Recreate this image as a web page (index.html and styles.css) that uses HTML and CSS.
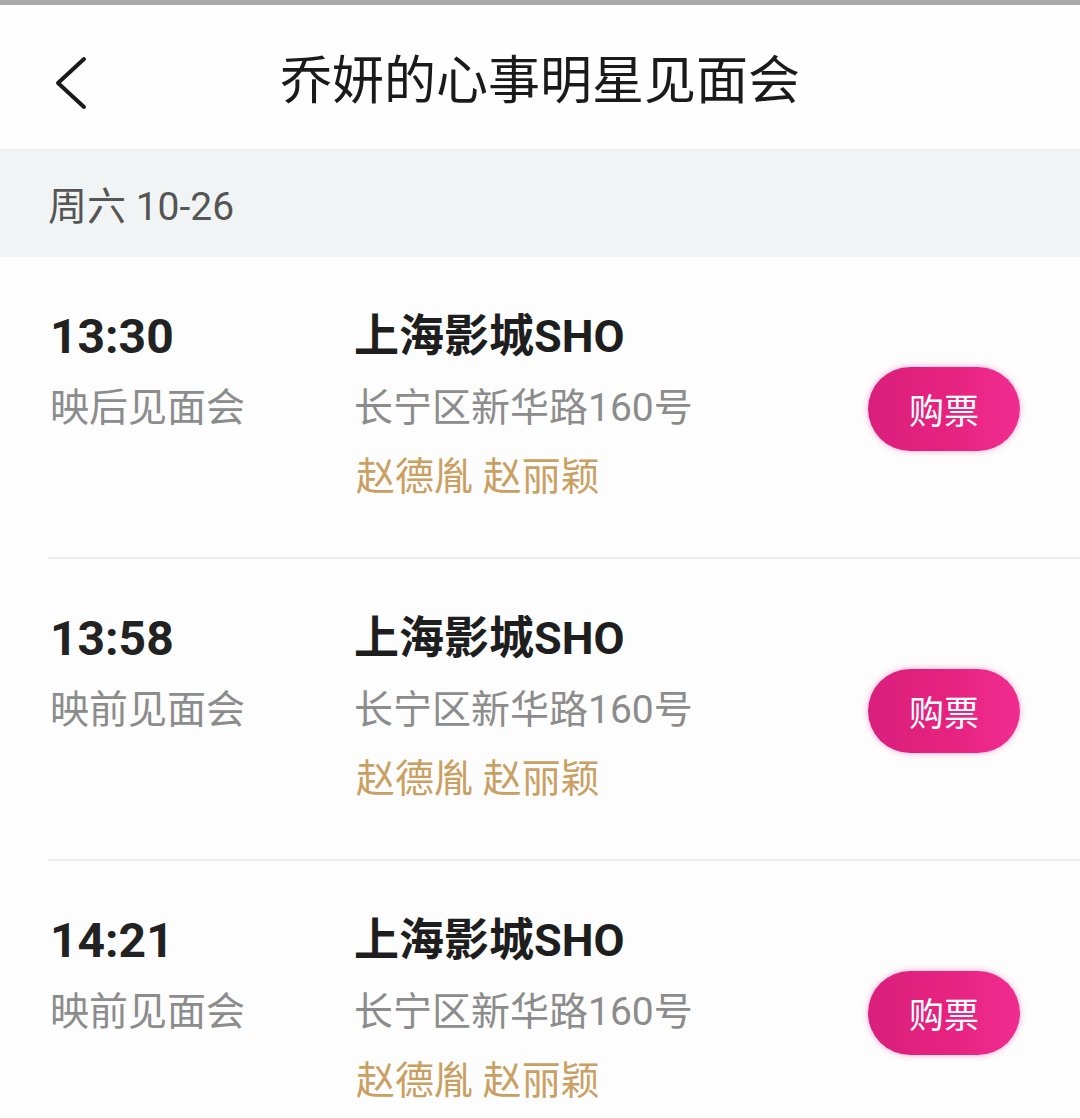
FILE: index.html
```html
<!DOCTYPE html>
<html lang="zh-CN">
<head>
<meta charset="utf-8">
<title>乔妍的心事明星见面会</title>
<link rel="stylesheet" href="styles.css">
</head>
<body>
<div class="page">
  <div class="topbar"></div>
  <header class="header">
    <svg class="back" width="40" height="56" viewBox="0 0 40 56">
      <path d="M32 4 L6 28 L32 52" fill="none" stroke="#1a1a1a" stroke-width="4" stroke-linecap="round" stroke-linejoin="round"/>
    </svg>
    <h1 class="title">乔妍的心事明星见面会</h1>
  </header>
  <div class="date">周六 10-26</div>
  <ul class="list">
    <li class="row">
      <div class="left">
        <div class="time">13:30</div>
        <div class="kind">映后见面会</div>
      </div>
      <div class="mid">
        <div class="venue">上海影城SHO</div>
        <div class="addr">长宁区新华路160号</div>
        <div class="stars">赵德胤 赵丽颖</div>
      </div>
      <div class="right"><button class="buy">购票</button></div>
    </li>
    <li class="row">
      <div class="left">
        <div class="time">13:58</div>
        <div class="kind">映前见面会</div>
      </div>
      <div class="mid">
        <div class="venue">上海影城SHO</div>
        <div class="addr">长宁区新华路160号</div>
        <div class="stars">赵德胤 赵丽颖</div>
      </div>
      <div class="right"><button class="buy">购票</button></div>
    </li>
    <li class="row">
      <div class="left">
        <div class="time">14:21</div>
        <div class="kind">映前见面会</div>
      </div>
      <div class="mid">
        <div class="venue">上海影城SHO</div>
        <div class="addr">长宁区新华路160号</div>
        <div class="stars">赵德胤 赵丽颖</div>
      </div>
      <div class="right"><button class="buy">购票</button></div>
    </li>
  </ul>
</div>
</body>
</html>
```

FILE: styles.css
```css
* { box-sizing: border-box; margin: 0; padding: 0; }
html, body { background: #fdfdfd; }
body {
  width: 1080px;
  height: 1118px;
  overflow: hidden;
  font-family: "Roboto", "Noto Sans CJK SC", "Noto Sans", sans-serif;
}
.page { width: 1080px; }
.topbar { height: 5px; background: #a9a9a9; }
.header {
  height: 145px;
  display: flex;
  align-items: center;
  justify-content: center;
  position: relative;
  background: #fefefe;
  border-bottom: 1px solid #ececec;
}
.back { position: absolute; left: 52px; top: 50px; }
.title {
  font-size: 52px;
  font-weight: 400;
  color: #1a1a1a;
  margin-top: -2px;
}
.date {
  height: 107px;
  background: #f1f4f4;
  color: #555;
  font-size: 39px;
  padding-left: 48px;
  display: flex;
  align-items: center;
  padding-bottom: 2px;
}
.list { list-style: none; }
.row {
  height: 302px;
  padding-top: 45px;
  margin-left: 48px;
  border-bottom: 2px solid #ececec;
  display: flex;
  background: #fdfdfd;
}
.left { width: 306px; padding-left: 2px; }
.mid { flex: 1; }
.time {
  height: 70px;
  line-height: 70px;
  font-size: 48px;
  font-weight: 700;
  color: #222;
}
.kind {
  height: 72px;
  line-height: 72px;
  font-size: 39px;
  color: #8c8c8c;
}
.venue {
  height: 70px;
  line-height: 70px;
  font-size: 45px;
  font-weight: 700;
  color: #1e1e1e;
}
.addr {
  height: 72px;
  line-height: 72px;
  font-size: 39px;
  color: #8c8c8c;
}
.stars {
  height: 66px;
  line-height: 66px;
  font-size: 39px;
  color: #c9a062;
  padding-left: 2px;
}
.right {
  width: 212px;
  padding-top: 65px;
}
.buy {
  width: 152px;
  height: 84px;
  border: none;
  border-radius: 42px;
  background: linear-gradient(90deg, #d91f7c 0%, #e6227f 50%, #f02c90 100%);
  box-shadow: 0 0 6px rgba(240, 60, 150, 0.45);
  color: #fff;
  font-family: "Noto Sans CJK SC", sans-serif;
  font-size: 35px;
  line-height: 84px;
  text-align: center;
}
```
